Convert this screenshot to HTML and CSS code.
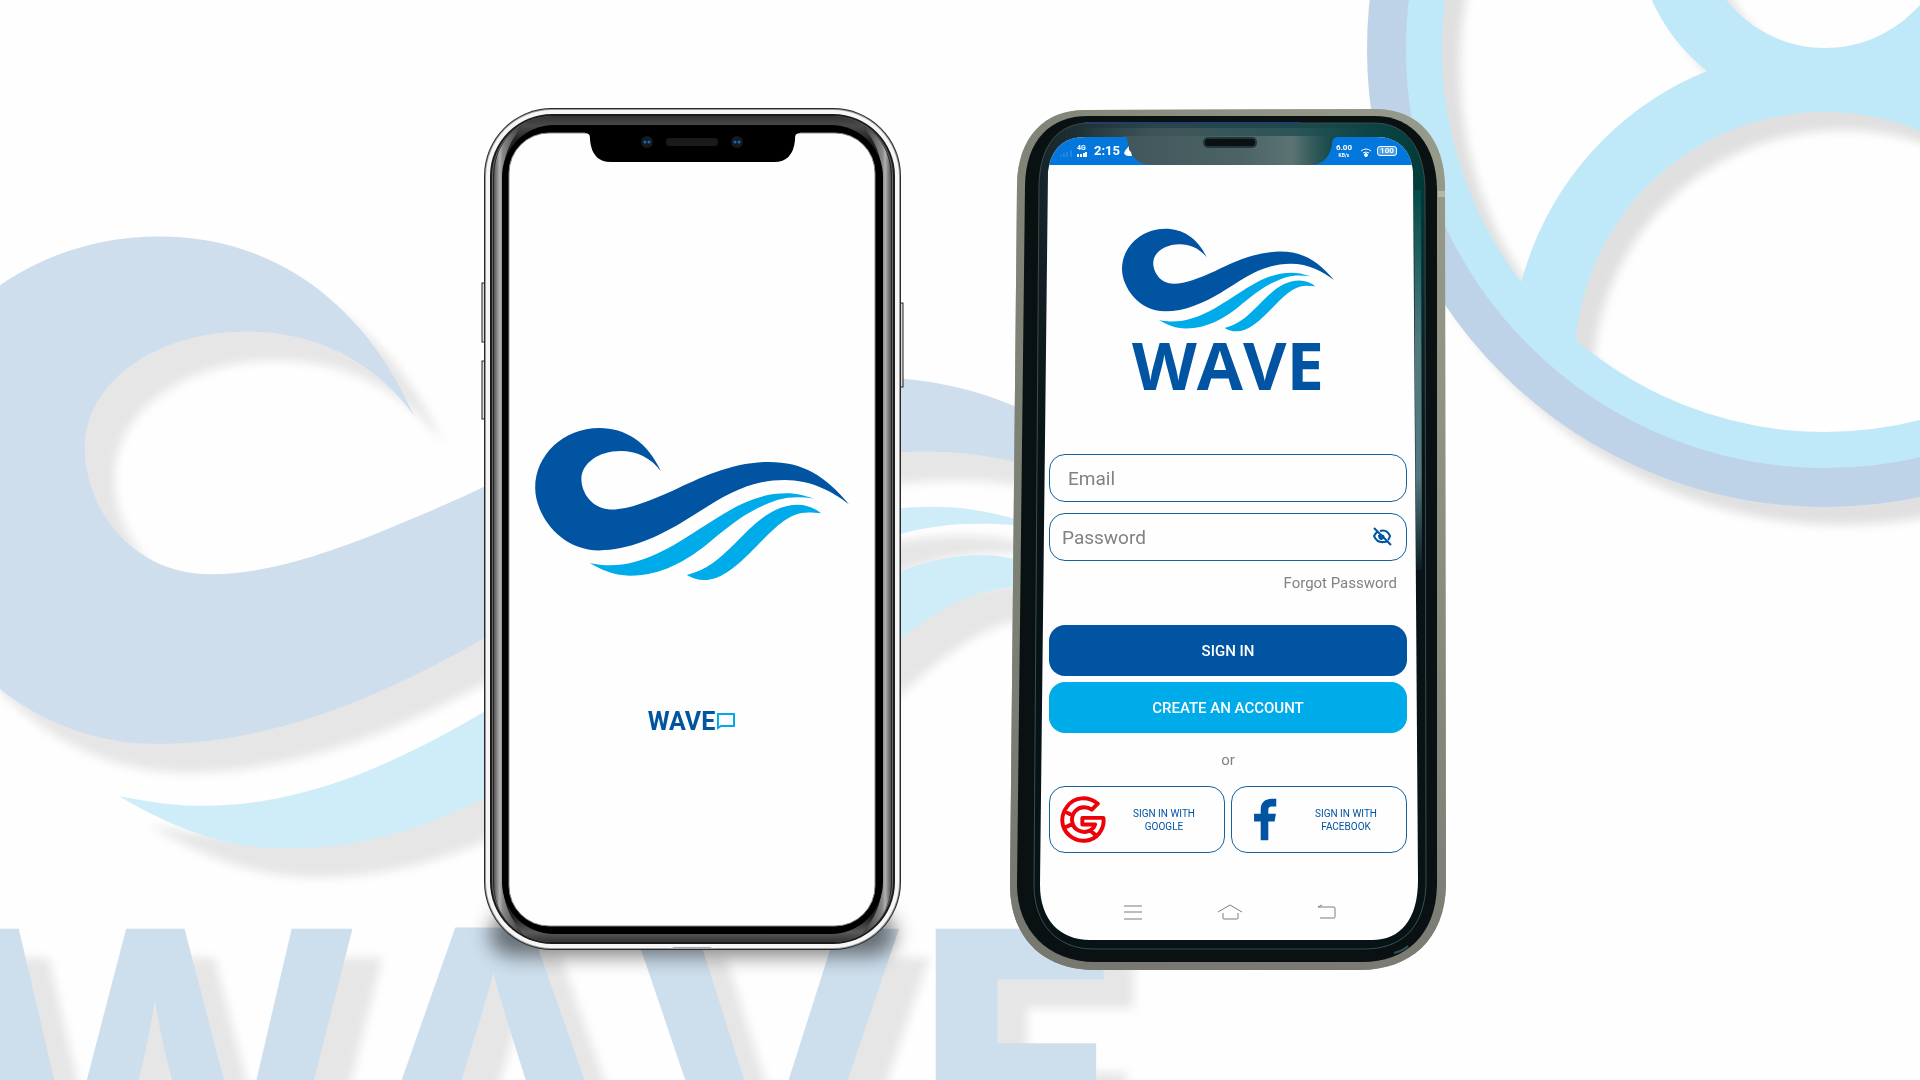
FILE: index.html
```html
<!DOCTYPE html>
<html lang="en">
<head>
<meta charset="utf-8">
<meta name="viewport" content="width=device-width, initial-scale=1">
<title>Wave</title>
<link rel="stylesheet" href="styles.css">
</head>
<body>
<svg class="defs" aria-hidden="true">
  <symbol id="wave" viewBox="105 84 943 457">
    <path class="deep" d="M483 214C443 125 375 84 298 84C190 84 105 165 105 264C105 345 180 452 297 452C385 452 470 413 543 370C640 312 725 240 855 240C935 240 1000 275 1048 313C978 228 910 186 808 186C700 186 600 234 520 272C450 303 388 329 336 329C274 329 244 276 244 238C244 190 295 153 362 153C410 153 453 173 483 214Z"/>
    <path class="bright" d="M269 490C300 508 340 528 390 528C485 528 560 482 620 435C700 368 750 328 835 300C870 290 905 291 942 296C910 285 885 280 860 280C750 280 670 345 600 387C520 439 430 497 330 497C310 497 290 494 269 490Z"/>
    <path class="bright" d="M561 526C578 536 595 541 612 541C670 541 720 490 770 440C820 390 865 338 925 338C940 338 953 339 965 340C945 325 920 315 895 315C815 315 757 378 704 433C660 477 620 512 561 526Z"/>
  </symbol>
</svg>

<svg class="backdrop" viewBox="0 0 1920 1080" preserveAspectRatio="xMidYMid slice" aria-hidden="true">
  <defs>
    <clipPath id="badge"><circle cx="1825" cy="49" r="400"/></clipPath>
  </defs>
  <g class="pale pale-wave">
    <use href="#wave" x="-107" y="236" width="1300" height="631"/>
    <text class="pale-word" x="-42" y="1220">WAVE</text>
  </g>
  <g class="pale pale-badge">
    <circle class="ring-outer" cx="1825" cy="49" r="438"/>
    <circle class="ring-inner" cx="1825" cy="49" r="401"/>
    <circle class="ring-part" cx="1825" cy="-78" r="158"/>
    <circle class="ring-part" cx="1825" cy="362" r="282" clip-path="url(#badge)"/>
  </g>
</svg>

<main class="stage">
  <section class="phone phone-splash" aria-label="Splash screen">
    <svg class="frame" viewBox="484 108 417 842" aria-hidden="true">
      <defs>
        <linearGradient id="lip" x2="0" y2="1"><stop offset="0" stop-color="#333"/><stop offset=".012" stop-color="#4a4a4a"/><stop offset=".03" stop-color="#222"/><stop offset=".97" stop-color="#222"/><stop offset=".988" stop-color="#5a5a5a"/><stop offset="1" stop-color="#333"/></linearGradient>
        <linearGradient id="glintLeft"><stop offset="0" stop-color="#555"/><stop offset=".2" stop-color="#b0b0b0"/><stop offset=".3" stop-color="#888"/><stop offset="1" stop-color="#333"/></linearGradient>
        <linearGradient id="glintRight"><stop offset="0" stop-color="#333"/><stop offset=".7" stop-color="#888"/><stop offset=".8" stop-color="#b0b0b0"/><stop offset="1" stop-color="#555"/></linearGradient>
        <filter id="soft" x="-20%" y="-100%" width="140%" height="300%"><feGaussianBlur stdDeviation="10"/></filter>
      </defs>
      <rect x="490" y="912" width="405" height="44" rx="22" fill="#000" opacity=".5" filter="url(#soft)"/>
      <g fill="#ddd" stroke="#222"><rect x="482" y="283" width="5" height="59"/><rect x="482" y="361" width="5" height="58"/><rect x="898" y="303" width="5" height="84"/></g>
      <rect x="484" y="108" width="417" height="842" rx="68" fill="#2a2a2a"/>
      <rect x="485" y="109" width="415" height="840" rx="67" fill="#9a9a9a"/>
      <rect x="486" y="110" width="413" height="838" rx="66" fill="#f6f6f6"/>
      <rect x="490" y="114" width="405" height="830" rx="62" fill="#1b1b1b"/>
      <rect x="492" y="116" width="401" height="826" rx="60" fill="#666"/>
      <rect x="493" y="116" width="399" height="826" rx="60" fill="url(#lip)"/>
      <path d="M523 125C503 136 494 155 494 178V882C494 904 503 923 523 934C510 918 503 904 503 882V178C503 155 510 141 523 125Z" fill="url(#glintLeft)"/>
      <path d="M862 125C882 136 891 155 891 178V882C891 904 882 923 862 934C875 918 882 904 882 882V178C882 155 875 141 862 125Z" fill="url(#glintRight)"/>
      <rect x="502" y="125" width="381" height="809" rx="52"/>
      <rect x="509" y="133" width="366" height="793" rx="40" fill="#fefefe" stroke="#888"/>
      <path d="M585 133Q590 133 590 138V140Q592 162 611 162H774Q793 162 795 140V138Q795 133 800 133V131H585Z"/>
      <rect x="666" y="138" width="52" height="8" rx="4" fill="#1a1a1a"/>
      <g fill="#151a20"><circle cx="647" cy="142" r="6"/><circle cx="737" cy="142" r="6"/></g>
      <g fill="#1769b5"><circle cx="645" cy="142" r="1.500"/><circle cx="649" cy="142" r="1.500"/><circle cx="735" cy="142" r="1.500"/><circle cx="739" cy="142" r="1.500"/></g>
      <path d="M669 949H715L710 947H674Z" fill="#aaa"/>
    </svg>
    <svg class="splash-logo" role="img" aria-label="Wave logo"><use href="#wave"/></svg>
    <p class="splash-name">WAVE<svg class="bubble" viewBox="0 0 18 17" aria-hidden="true"><path d="M1 15V1H17V13H4Z"/></svg></p>
  </section>

  <section class="phone phone-login" aria-label="Sign in screen">
    <svg class="frame" viewBox="1010 109 436 861" aria-hidden="true">
      <defs>
        <linearGradient id="case" x2="1" y2="0"><stop offset="0" stop-color="#6e7267"/><stop offset=".5" stop-color="#8c9081"/><stop offset="1" stop-color="#a0a191"/></linearGradient>
        <linearGradient id="caseDown" x2="0" y2="1"><stop offset="0" stop-color="#8f9585" stop-opacity=".5"/><stop offset="1" stop-color="#777770" stop-opacity=".9"/></linearGradient>
        <linearGradient id="bezel" x2="1" y2="0"><stop offset="0" stop-color="#16252a"/><stop offset=".3" stop-color="#2c454c"/><stop offset=".7" stop-color="#1b4a4c"/><stop offset="1" stop-color="#003f3d"/></linearGradient>
        <linearGradient id="fade" x2="0" y2="1"><stop offset="0" stop-color="#071317" stop-opacity="0"/><stop offset=".12" stop-color="#071317" stop-opacity=".2"/><stop offset=".4" stop-color="#071317"/></linearGradient>
        <linearGradient id="shine" x2="0" y2="1"><stop offset="0" stop-color="#004b48"/><stop offset=".4" stop-color="#537980"/><stop offset=".75" stop-color="#537980"/><stop offset="1" stop-color="#0b1d22"/></linearGradient>
        <linearGradient id="notch"><stop offset="0" stop-color="#40565a"/><stop offset=".55" stop-color="#4d6467"/><stop offset=".78" stop-color="#5b7373"/><stop offset=".9" stop-color="#2a5555"/><stop offset="1" stop-color="#0a4545"/></linearGradient>
        <linearGradient id="brow"><stop offset="0" stop-color="#40565a" stop-opacity="0"/><stop offset=".3" stop-color="#40565a"/><stop offset=".7" stop-color="#2a5558"/><stop offset="1" stop-color="#0a4545" stop-opacity="0"/></linearGradient>
        <clipPath id="glass"><path d="M1048 172C1051 148 1064 137 1086 137H1376C1398 137 1411 150 1413 172L1418 880C1418 920 1400 940 1372 940H1090C1060 940 1040 920 1040 885Z"/></clipPath>
      </defs>
      <path d="M1017 185C1018 136 1045 110 1085 110L1377 109C1420 110 1444 140 1445 185L1446 885C1445 940 1410 970 1360 970H1095C1040 970 1010 935 1010 885Z" fill="url(#case)"/>
      <path d="M1017 185C1018 136 1045 110 1085 110L1377 109C1420 110 1444 140 1445 185L1446 885C1445 940 1410 970 1360 970H1095C1040 970 1010 935 1010 885Z" fill="url(#caseDown)"/>
      <path d="M1438 191H1445V197H1438Z" fill="#b3b8a4"/>
      <path d="M1025 185C1026 140 1050 116 1088 116H1374C1414 116 1436 146 1437 188V885C1436 935 1406 962 1362 962H1095C1048 962 1017 930 1017 885Z" fill="#0a1112"/>
      <path d="M1039 185C1040 145 1058 123 1090 123H1374C1408 123 1424 150 1425 188L1426 885C1424 930 1400 949 1364 949H1093C1058 949 1034 925 1034 885Z" fill="url(#bezel)"/>
      <path d="M1039 185C1040 145 1058 123 1090 123H1374C1408 123 1424 150 1425 188L1426 885C1424 930 1400 949 1364 949H1093C1058 949 1034 925 1034 885Z" fill="url(#fade)" stroke="#3f4a4a"/>
      <path d="M1084 123H1300" stroke="#223f6b" stroke-width="2"/>
      <path d="M1414 190H1421L1422 570H1416Z" fill="url(#shine)"/>
      <path d="M1048 172C1051 148 1064 137 1086 137H1376C1398 137 1411 150 1413 172L1418 880C1418 920 1400 940 1372 940H1090C1060 940 1040 920 1040 885Z" fill="#fefefe"/>
      <rect x="1040" y="137" width="380" height="28" fill="#0477dc" clip-path="url(#glass)"/>
      <path d="M1080 128H1390V137H1080Z" fill="url(#brow)"/>
      <path d="M1122 136Q1128 137 1128 143V145Q1133 165 1152 165H1310Q1328 165 1332 145V143Q1332 137 1340 136Z" fill="url(#notch)"/>
      <rect x="1204" y="138" width="52" height="9" rx="4" fill="#091113" stroke="#263639" stroke-width="2"/>
      <path d="M1394 953Q1403 951 1408 946" fill="none" stroke="#34505a" stroke-width="2"/>
    </svg>

    <div class="status">
      <div class="status-side">
        <svg class="signal" viewBox="0 0 13 8" aria-hidden="true"><path d="M1 8V6M4 8V4M7 8V3M11 8V1"/></svg>
        <span class="network">4G<svg viewBox="0 0 10 5" aria-hidden="true"><path d="M1 5V2M4 5V2M7 5V1M9 5V0"/></svg></span>
        <time>2:15</time>
        <svg class="drop" viewBox="0 0 8 10" aria-hidden="true"><path d="M5 0Q1 4 0 7Q1 10 5 10H8L7 6Q4 4 5 0Z"/></svg>
      </div>
      <div class="status-side">
        <span class="speed">6.00<small>KB/s</small></span>
        <svg class="wifi" viewBox="0 0 12 9" aria-hidden="true"><path d="M1 3Q6 -1 11 3M3 5Q6 3 9 5"/><circle cx="6" cy="7" r="1.500"/></svg>
        <span class="battery">100</span>
      </div>
    </div>

    <header class="brand">
      <svg class="brand-logo" aria-hidden="true"><use href="#wave"/></svg>
      <h1>WAVE</h1>
    </header>

    <form class="login">
      <input class="field field-email" type="email" placeholder="Email" aria-label="Email">
      <div class="field-wrap">
        <input class="field" type="password" placeholder="Password" aria-label="Password">
        <button class="reveal" type="button" aria-label="Show password"><svg viewBox="0 0 19 19" aria-hidden="true"><path d="M1 1L18 18M7 4Q14 2 17 9Q16 12 15 13M4 5Q2 7 1 9Q4 16 11 15Q13 15 14 14M6 8Q6 12 9 12"/><circle cx="9" cy="10" r="1.500"/></svg></button>
      </div>
      <a class="forgot" href="#">Forgot Password</a>
      <button class="action action-primary" type="submit">SIGN IN</button>
      <button class="action action-secondary" type="button">CREATE AN ACCOUNT</button>
      <p class="or">or</p>
      <div class="social">
        <button class="provider" type="button">
          <svg class="google" viewBox="180 137 140 142" aria-hidden="true"><path d="M277 178L295 160C265 136 225 138 202 168C180 196 182 234 209 257C236 281 279 277 300 249C312 232 315 220 312 203H248V223H287C280 243 256 252 235 241C213 229 211 197 228 181C242 168 262 168 277 178ZM193 183L217 195M193 233L217 222M270 239L291 258"/></svg>
          <span>SIGN IN WITH GOOGLE</span>
        </button>
        <button class="provider" type="button">
          <svg class="facebook" viewBox="740 137 110 142" aria-hidden="true"><path d="M829 145H817C792 145 782 159 782 178V191H762V214H782V271H805V214H824L828 191H805V180C805 172 808 169 815 169H829Z"/></svg>
          <span>SIGN IN WITH FACEBOOK</span>
        </button>
      </div>
    </form>

    <nav class="keys" aria-label="System">
      <button type="button" aria-label="Recent"><svg viewBox="0 0 24 16"><path d="M3 2H21M3 8H21M3 15H21"/></svg></button>
      <button type="button" aria-label="Home"><svg viewBox="0 0 24 16"><path d="M0 8L12 1L24 8M5 9V14Q5 15 6 15H19Q20 15 20 14V9"/></svg></button>
      <button type="button" aria-label="Back"><svg viewBox="0 0 24 16"><path d="M8 1L4 3H20Q21 3 21 4V13Q21 14 20 14H6"/></svg></button>
    </nav>
  </section>
</main>
</body>
</html>
```
FILE: styles.css
```css
* { box-sizing: border-box; }

:root {
  --deep: #0054a2;
  --bright: #00abe9;
  --muted: #828282;
  --line: #14639f;
}

body {
  margin: 0;
  background: #fefefe;
  font-family: Roboto, "Liberation Sans", sans-serif;
  overflow: hidden;
}

button {
  border: 0;
  padding: 0;
  background: none;
  font: inherit;
  cursor: pointer;
}

.defs {
  position: absolute;
  width: 0;
  height: 0;
}

.deep { fill: var(--deep); }
.bright { fill: var(--bright); }

.backdrop {
  --deep: #cedeed;
  --bright: #cfedf9;
  position: fixed;
  inset: 0;
  width: 100%;
  height: 100%;
}

.pale-wave { filter: drop-shadow(30px 29px 5px #e6e6e6); }
.pale-badge { filter: drop-shadow(18px 18px 5px #e0e0e0); fill: none; }
.pale-word {
  fill: #cddeec;
  font: 700 408px "Open Sans", "Noto Sans", sans-serif;
}
.ring-outer { stroke: #bfd3e8; stroke-width: 40; }
.ring-inner { stroke: #bfe9f8; stroke-width: 36; }
.ring-part { stroke: #bfe9f8; stroke-width: 64; }

.stage {
  position: relative;
  min-height: 100vh;
  display: flex;
  justify-content: center;
  align-items: flex-start;
  gap: 109px;
  padding: 108px 0 0 10px;
}

.phone {
  position: relative;
  display: flex;
  flex-direction: column;
  align-items: center;
}

.frame {
  position: absolute;
  inset: 0;
  width: 100%;
  height: 100%;
  overflow: visible;
}

.phone > :not(.frame) { position: relative; }

.phone-splash {
  width: 417px;
  min-height: 842px;
  padding: 320px 2px 0 0;
}

.splash-logo {
  width: 314px;
  height: 152px;
}

.splash-name {
  display: flex;
  align-items: center;
  gap: 2px;
  margin: 124px 0 0;
  color: var(--deep);
  font-size: 25px;
  line-height: 36px;
  font-weight: 700;
}

.bubble {
  width: 18px;
  height: 17px;
  margin-bottom: 2px;
  fill: none;
  stroke: var(--bright);
  stroke-width: 2;
}

.phone-login {
  width: 436px;
  min-height: 861px;
  margin-top: 1px;
  padding: 28px 39px 0 39px;
}

.status {
  align-self: stretch;
  display: flex;
  justify-content: space-between;
  height: 28px;
  padding: 0 10px 0 11px;
  color: #fff;
  font-weight: 700;
}

.status-side {
  display: flex;
  align-items: center;
}

.status svg {
  fill: #fff;
  stroke: none;
}

.status .signal {
  width: 13px;
  height: 8px;
  fill: none;
  stroke: #3e9bea;
  margin: 4px 4px 0 0;
}

.network {
  display: grid;
  width: 10px;
  font-size: 7px;
  line-height: 7px;
}

.network svg {
  width: 10px;
  height: 5px;
  stroke: #fff;
  stroke-width: 2;
}

.status time {
  margin-left: 7px;
  font-size: 13px;
  line-height: 28px;
}

.drop {
  width: 8px;
  height: 10px;
  margin-left: 4px;
}

.speed {
  display: grid;
  justify-items: center;
  font-size: 8px;
  line-height: 8px;
}

.speed small {
  font-size: 5px;
  line-height: 6px;
}

.status .wifi {
  width: 12px;
  height: 9px;
  margin: 2px 5px 0 8px;
  stroke: #fff;
}

.status .wifi path { fill: none; }

.battery {
  width: 20px;
  border: 1px solid #fff;
  border-radius: 3px;
  background: #4ba0e8;
  font-size: 8px;
  line-height: 8px;
  text-align: center;
}

.brand {
  display: flex;
  flex-direction: column;
  align-items: center;
  padding-top: 63px;
}

.brand-logo {
  width: 212px;
  height: 104px;
}

.brand h1 {
  margin: 0;
  color: var(--deep);
  font: 700 67px/64px "Open Sans", "Noto Sans", sans-serif;
}

.login {
  align-self: stretch;
  display: flex;
  flex-direction: column;
  margin-top: 58px;
}

.field {
  width: 100%;
  height: 48px;
  padding: 0 48px 0 12px;
  border: 1px solid var(--line);
  border-radius: 16px;
  background: none;
  color: #333;
  font: 19px Roboto, "Liberation Sans", sans-serif;
  outline: none;
}

.field::placeholder {
  color: var(--muted);
  opacity: 1;
}

.field-email { padding-left: 18px; }

.field-wrap {
  position: relative;
  margin-top: 11px;
}

.reveal {
  position: absolute;
  top: 14px;
  right: 15px;
  width: 19px;
  height: 19px;
}

.reveal svg {
  display: block;
  fill: none;
  stroke: var(--deep);
  stroke-width: 2;
}

.forgot {
  align-self: flex-end;
  margin: 12px 10px 0 0;
  color: var(--muted);
  font-size: 15px;
  line-height: 20px;
  text-decoration: none;
}

.action {
  height: 51px;
  border-radius: 16px;
  color: #fff;
  font-size: 15px;
  font-weight: 500;
}

.action-primary {
  margin-top: 32px;
  background: var(--deep);
}

.action-secondary {
  margin-top: 6px;
  background: var(--bright);
}

.or {
  margin: 17px 0 16px;
  color: var(--muted);
  font-size: 15px;
  line-height: 20px;
  text-align: center;
}

.social {
  display: grid;
  grid-template-columns: 1fr 1fr;
  gap: 6px;
}

.provider {
  display: flex;
  align-items: center;
  height: 67px;
  padding: 0 16px 0 10px;
  border: 1px solid var(--line);
  border-radius: 16px;
  color: var(--deep);
  font-size: 10px;
  line-height: 13px;
}

.provider span {
  flex: 1;
  padding: 0 8px 0 22px;
  text-align: center;
}

.google {
  width: 46px;
  height: 47px;
  fill: none;
  stroke: #ee0008;
  stroke-width: 12;
  stroke-linejoin: round;
}

.facebook {
  width: 46px;
  height: 47px;
  fill: var(--deep);
}

.keys {
  align-self: stretch;
  display: flex;
  justify-content: space-between;
  padding: 51px 69px 0 72px;
}

.keys button { height: 16px; }

.keys svg {
  display: block;
  width: 24px;
  height: 16px;
  fill: none;
  stroke: #7d7d7d;
}
```
